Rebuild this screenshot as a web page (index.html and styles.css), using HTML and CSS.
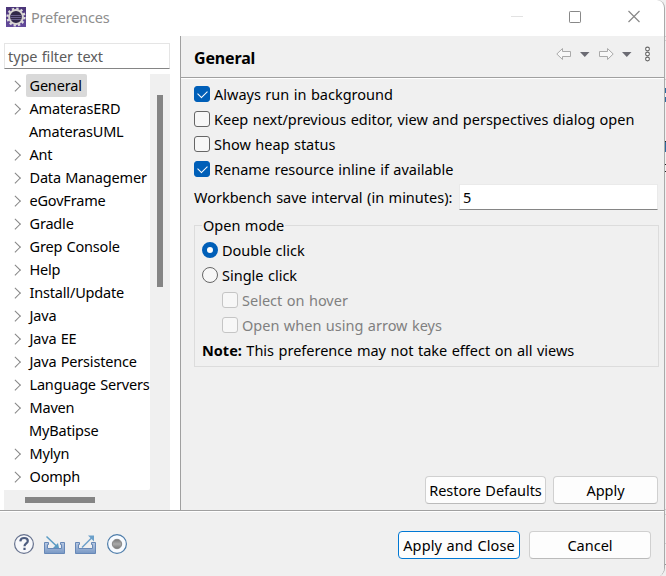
FILE: index.html
```html
<!DOCTYPE html>
<html lang="en">
<head>
<meta charset="utf-8">
<title>Preferences</title>
<link rel="stylesheet" href="styles.css">
</head>
<body>
<svg class="behind" viewBox="0 0 8 576" aria-hidden="true">
  <path fill="#f0f0f0" d="M0 0h8v576H0z"/>
  <path fill="#cfcfcf" d="M6 36h2v1H6zM6 40h2v1H6zM6 79h2v1H6zM6 509h2v1H6zM6 514h2v1H6zM6 543h2v1H6z"/>
  <path fill="#2d6a9f" d="M6 88h2v5H6zM6 97h2v5H6zM6 142h2v10H6z"/>
  <path fill="#222" d="M6 141h2v1H6zM6 164h2v1H6zM6 171h2v1H6z"/>
  <path fill="#999" d="M6 564h2v1H6z"/>
</svg>
<div class="window">
  <header class="titlebar">
    <svg class="app-icon" viewBox="0 0 20 20">
      <defs><linearGradient id="app" x2="0" y2="1"><stop stop-color="#493477"/><stop offset="1" stop-color="#654b9d"/></linearGradient></defs>
      <path fill="url(#app)" d="M0 0h20v20H0z"/>
      <circle cx="10" cy="10" r="8.500" fill="none" stroke="#ddd" stroke-width="2.200" stroke-dasharray="2.300 2.150"/>
      <circle cx="10" cy="10" r="6.900" fill="#302849" stroke="#d8d5d2" stroke-width="2"/>
      <path fill="#69608d" d="M4.500 8h11v1h-11zM4.200 10h11.600v1H4.200zM5 12h10v1H5z"/>
    </svg>
    <h1 class="title">Preferences</h1>
    <svg class="window-controls" viewBox="0 0 132 20" fill="none">
      <path stroke="#e2e2e2" d="M1 9.500h12"/>
      <rect x="59.500" y="4.500" width="11" height="11" rx=".7" stroke="#888"/>
      <path stroke="#888" stroke-width="1.200" d="m118.500 4 11 11m0-11-11 11"/>
    </svg>
  </header>
  <main class="body">
    <nav class="sidebar">
      <div class="filter">type filter text</div>
      <div class="tree-area">
        <ul class="tree">
          <li class="parent selected"><span>General</span></li>
          <li class="parent"><span>AmaterasERD</span></li>
          <li><span>AmaterasUML</span></li>
          <li class="parent"><span>Ant</span></li>
          <li class="parent"><span>Data Managemer</span></li>
          <li class="parent"><span>eGovFrame</span></li>
          <li class="parent"><span>Gradle</span></li>
          <li class="parent"><span>Grep Console</span></li>
          <li class="parent"><span>Help</span></li>
          <li class="parent"><span>Install/Update</span></li>
          <li class="parent"><span>Java</span></li>
          <li class="parent"><span>Java EE</span></li>
          <li class="parent"><span>Java Persistence</span></li>
          <li class="parent"><span>Language Servers</span></li>
          <li class="parent"><span>Maven</span></li>
          <li><span>MyBatipse</span></li>
          <li class="parent"><span>Mylyn</span></li>
          <li class="parent"><span>Oomph</span></li>
        </ul>
        <div class="scroll-y"><i></i></div>
        <div class="scroll-x"><i></i></div>
      </div>
    </nav>
    <section class="page">
      <div class="page-head">
        <h2>General</h2>
        <svg class="page-nav" viewBox="0 0 98 20">
          <g fill="#f8f8f8" stroke="#aaa" stroke-linejoin="round">
            <path d="M.8 10 6.500 4.500v3h8v5h-8v3z"/><path d="M57.200 10 51.500 4.500v3h-8v5h8v3z"/>
          </g>
          <path fill="#6b6b73" d="M24 8h9.500l-4.700 5zM66 8h9.500l-4.700 5z"/>
          <g fill="#fff" stroke="#666" stroke-width="1.100"><circle cx="91.500" cy="5" r="1.900"/><circle cx="91.500" cy="10" r="1.900"/><circle cx="91.500" cy="15" r="1.900"/></g>
        </svg>
      </div>
      <div class="settings">
        <div class="option"><i class="check on"></i><span>Always run in background</span></div>
        <div class="option"><i class="check"></i><span>Keep next/previous editor, view and perspectives dialog open</span></div>
        <div class="option"><i class="check"></i><span>Show heap status</span></div>
        <div class="option"><i class="check on"></i><span>Rename resource inline if available</span></div>
        <div class="interval"><span>Workbench save interval (in minutes):</span><div class="input">5</div></div>
        <fieldset>
          <legend>Open mode</legend>
          <div class="option"><i class="radio on"></i><span>Double click</span></div>
          <div class="option"><i class="radio"></i><span>Single click</span></div>
          <div class="option child"><i class="check"></i><span>Select on hover</span></div>
          <div class="option child"><i class="check"></i><span>Open when using arrow keys</span></div>
          <p class="note"><b>Note:</b> This preference may not take effect on all views</p>
        </fieldset>
      </div>
      <div class="page-actions"><div class="button restore">Restore Defaults</div><div class="button apply">Apply</div></div>
    </section>
  </main>
  <footer class="footer">
    <svg class="tools" viewBox="0 0 116 24" fill="none">
      <defs>
        <linearGradient id="tray" x2="0" y2="1"><stop stop-color="#b9c9e2"/><stop offset="1" stop-color="#7898c5"/></linearGradient>
        <linearGradient id="dot" x2="0" y2="1"><stop stop-color="#777"/><stop offset=".5" stop-color="#aaa"/><stop offset="1" stop-color="#777"/></linearGradient>
      </defs>
      <circle cx="11" cy="12" r="9.400" fill="#f7f8fb" stroke="#66728e" stroke-width="1.200"/>
      <path stroke="#4d5d80" stroke-width="2.200" d="M7.300 9.300C7.500 6.900 9 6 11.100 6c2.200 0 3.700 1.200 3.700 3 0 2.300-3.300 2.600-3.300 5.200m0 1.500V18"/>
      <path fill="url(#tray)" stroke="#6788b7" d="M31.500 10.500h4v2h-1v4h14v-4h-1v-2h4v11h-20z"/>
      <path stroke="#5b9bc3" stroke-width="1.500" d="m33.500 4.500 10.500 10"/><path fill="#5b9bc3" d="M46 16h-6l5-5z"/>
      <path fill="url(#tray)" stroke="#6788b7" d="M62.500 10.500h4v2h-1v4h14v-4h-1v-2h4v11h-20z"/>
      <path stroke="#6a9fc9" stroke-width="1.500" d="m69 15.500 9.500-9.500"/><path fill="#6a9fc9" d="M81 3.500v6l-6-6z"/>
      <circle cx="104" cy="12" r="9.400" fill="#f8fbff" stroke="#4d7ca9" stroke-width="1.200"/>
      <circle cx="104" cy="12" r="4.700" fill="url(#dot)" stroke="#888"/>
    </svg>
    <div class="button primary">Apply and Close</div><div class="button cancel">Cancel</div>
  </footer>
</div>
</body>
</html>
```

FILE: styles.css
```css
* { box-sizing: border-box; }
body {
  margin: 0;
  width: 666px;
  height: 576px;
  overflow: hidden;
  background: #f0f0f0;
  color: #000;
  font: 14.5px/23px "Noto Sans", "Open Sans", sans-serif;
  white-space: nowrap;
  word-spacing: .7px;
}
.behind { position: absolute; top: 0; right: 0; width: 8px; height: 576px; }
.window {
  position: relative;
  display: flex;
  flex-direction: column;
  width: 665px;
  height: 577px;
  border-right: 1px solid #aaa;
  border-radius: 0 8px 9px 0;
  overflow: hidden;
  background: #fff;
}
.titlebar { display: flex; align-items: center; height: 36px; padding: 0 22px 2px 6px; flex: none; }
.app-icon { width: 20px; height: 20px; }
.title { margin: 1px 0 0 5px; color: #8e8e8e; font-size: 14.5px; font-weight: 400; letter-spacing: -.2px; }
.window-controls { width: 132px; height: 20px; margin-left: auto; }
.body { display: flex; height: 474px; flex: none; }
.sidebar { width: 180px; padding: 7px 10px 0 4px; }
.filter {
  width: 166px;
  height: 26px;
  padding: 1px 3px;
  border: 1px solid #e5e5e5;
  border-bottom-color: #858585;
  color: #5c5c5c;
  letter-spacing: -.1px;
}
.tree-area {
  display: grid;
  grid-template: 416px 20px / 146px 20px;
  margin-top: 5px;
  background: #f0f0f0;
}
.tree { margin: 0; padding: 0 0 0 9px; list-style: none; background: #fff; overflow: hidden; border-radius: 0 0 2px 0; letter-spacing: -.18px; }
.tree li { display: flex; align-items: center; height: 23px; padding-left: 12px; }
.tree li span { padding: 0 4px; line-height: 23px; }
.tree .parent { padding-left: 0; }
.tree .parent::before {
  content: "";
  flex: none;
  width: 6.5px;
  height: 6.5px;
  margin-right: 5.5px;
  border: solid #858585;
  border-width: 1px 1px 0 0;
  transform: translateX(-1.5px) rotate(45deg);
}
.tree .parent span { margin-left: -.5px; }
.tree .selected span { background: #d9d9d9; border-radius: 2px; padding-right: 5px; }
.scroll-y { padding: 21px 0 0 7px; }
.scroll-y i { display: block; width: 6px; height: 192px; background: #858585; }
.scroll-x { padding: 7px 0 0 21px; }
.scroll-x i { display: block; width: 70px; height: 6px; background: #858585; }
.page { display: flex; flex-direction: column; width: 484px; border-left: 1px solid #a0a0a0; background: #f0f0f0; }
.page-head {
  display: flex;
  justify-content: space-between;
  height: 43px;
  padding: 8px 10px 0 13px;
  border-bottom: 1px solid #fff;
  box-shadow: inset 0 -1px #a0a0a0;
}
h2 { margin: 2px 0 0; font-size: 16px; line-height: 24px; letter-spacing: -.15px; }
.page-nav { width: 98px; height: 20px; }
.settings { padding: 2px 5px 0 13px; }
.option { display: flex; align-items: center; height: 25px; }
.option span { margin-left: 4px; padding-top: 1px; }
.check, .radio { flex: none; position: relative; width: 16px; height: 16px; border: 1px solid #666; border-radius: 3px; background: #f7f7f7; }
.radio { border-radius: 50%; }
.on { background: #005fb8; border-color: #005fb8; }
.check.on::after { content: ""; position: absolute; left: 3px; top: 3px; width: 8px; height: 5px; border: solid #fff; border-width: 0 0 1px 1px; transform: rotate(-45deg); }
.radio.on { border-width: 5px; background: #fff; }
.interval { display: flex; justify-content: space-between; align-items: center; height: 26px; margin-top: 3px; padding-right: 1px; }
.input { width: 199px; height: 26px; padding: 1px 3px; border: 1px solid #eaeaea; border-bottom-color: #858585; background: #fff; }
fieldset { height: 153px; min-width: 0; margin: 4px 0 0; padding: 0 7px; border: 1px solid #dcdcdc; }
legend { height: 23px; margin: 0; padding: 0 1px; line-height: 23px; }
.child { padding-left: 20px; color: #808080; }
.child .check { border-color: #c5c5c5; }
.note { margin: 0; line-height: 26px; }
.page-actions { display: flex; justify-content: flex-end; gap: 7px; margin-top: auto; padding: 0 6px 6px; }
.button { height: 28px; border: 1px solid #d0d0d0; border-bottom-color: #bbb; border-radius: 4px; background: #fdfdfd; text-align: center; line-height: 27px; }
.restore { width: 121px; letter-spacing: -.05px; }
.apply { width: 105px; }
.footer { display: flex; align-items: center; height: 67px; padding: 2px 13px 0; border-top: 1px solid #a0a0a0; box-shadow: inset 0 1px #fff; background: #f0f0f0; }
.tools { width: 116px; height: 24px; margin: 0 auto 2px 0; }
.primary { width: 122px; border-color: #0078d4; margin-right: 9px; letter-spacing: .1px; }
.cancel { width: 122px; }
```
